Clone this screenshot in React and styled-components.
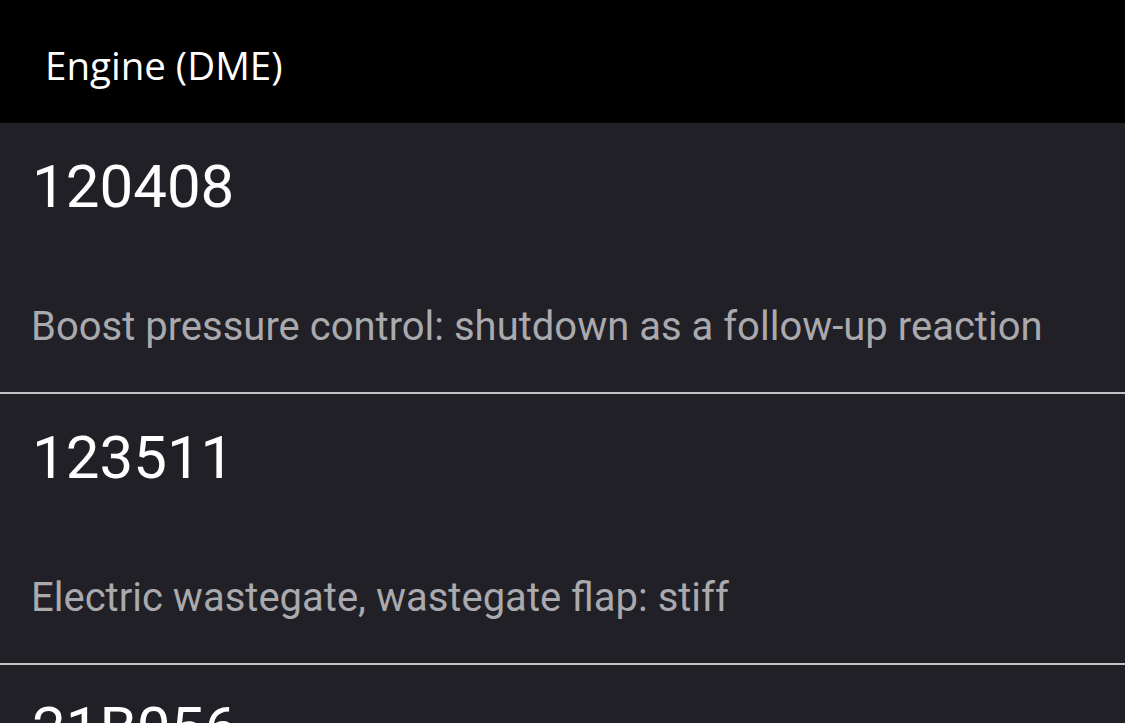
import React from "react";
import styled, { createGlobalStyle } from "styled-components";

const GlobalStyle = createGlobalStyle`
  html, body {
    margin: 0;
    padding: 0;
    background: #202026;
  }
  * {
    box-sizing: border-box;
  }
`;

const Screen = styled.div`
  width: 1125px;
  height: 723px;
  overflow: hidden;
  display: flex;
  flex-direction: column;
  background: #202026;
`;

const Header = styled.header`
  height: 123px;
  flex-shrink: 0;
  background: #000000;
  display: flex;
  align-items: center;
  padding: 6px 45px 0;
`;

const Title = styled.h1`
  margin: 0;
  font-family: "Open Sans", "Noto Sans", sans-serif;
  font-weight: 400;
  font-size: 38.5px;
  color: #ffffff;
`;

const List = styled.div`
  display: flex;
  flex-direction: column;
`;

const Row = styled.div`
  height: 271px;
  flex-shrink: 0;
  display: flex;
  flex-direction: column;
  padding: 28px 31px 0;
  border-bottom: 2px solid #c4c0c4;
`;

const Code = styled.div`
  font-family: Roboto, "Noto Sans", sans-serif;
  font-weight: 400;
  font-size: 60px;
  line-height: 72px;
  color: #ffffff;
  padding-left: 1px;
`;

const Description = styled.div`
  margin-top: 78px;
  font-family: Roboto, "Noto Sans", sans-serif;
  font-weight: 400;
  font-size: 40px;
  line-height: 52px;
  color: #a9a9ae;
`;

const faults = [
  { code: "120408", text: "Boost pressure control: shutdown as a follow-up reaction" },
  { code: "123511", text: "Electric wastegate, wastegate flap: stiff" },
  { code: "21B056", text: "" },
];

export default function App() {
  return (
    <>
      <GlobalStyle />
      <Screen>
        <Header>
          <Title>Engine (DME)</Title>
        </Header>
        <List>
          {faults.map((f) => (
            <Row key={f.code}>
              <Code>{f.code}</Code>
              <Description>{f.text}</Description>
            </Row>
          ))}
        </List>
      </Screen>
    </>
  );
}
